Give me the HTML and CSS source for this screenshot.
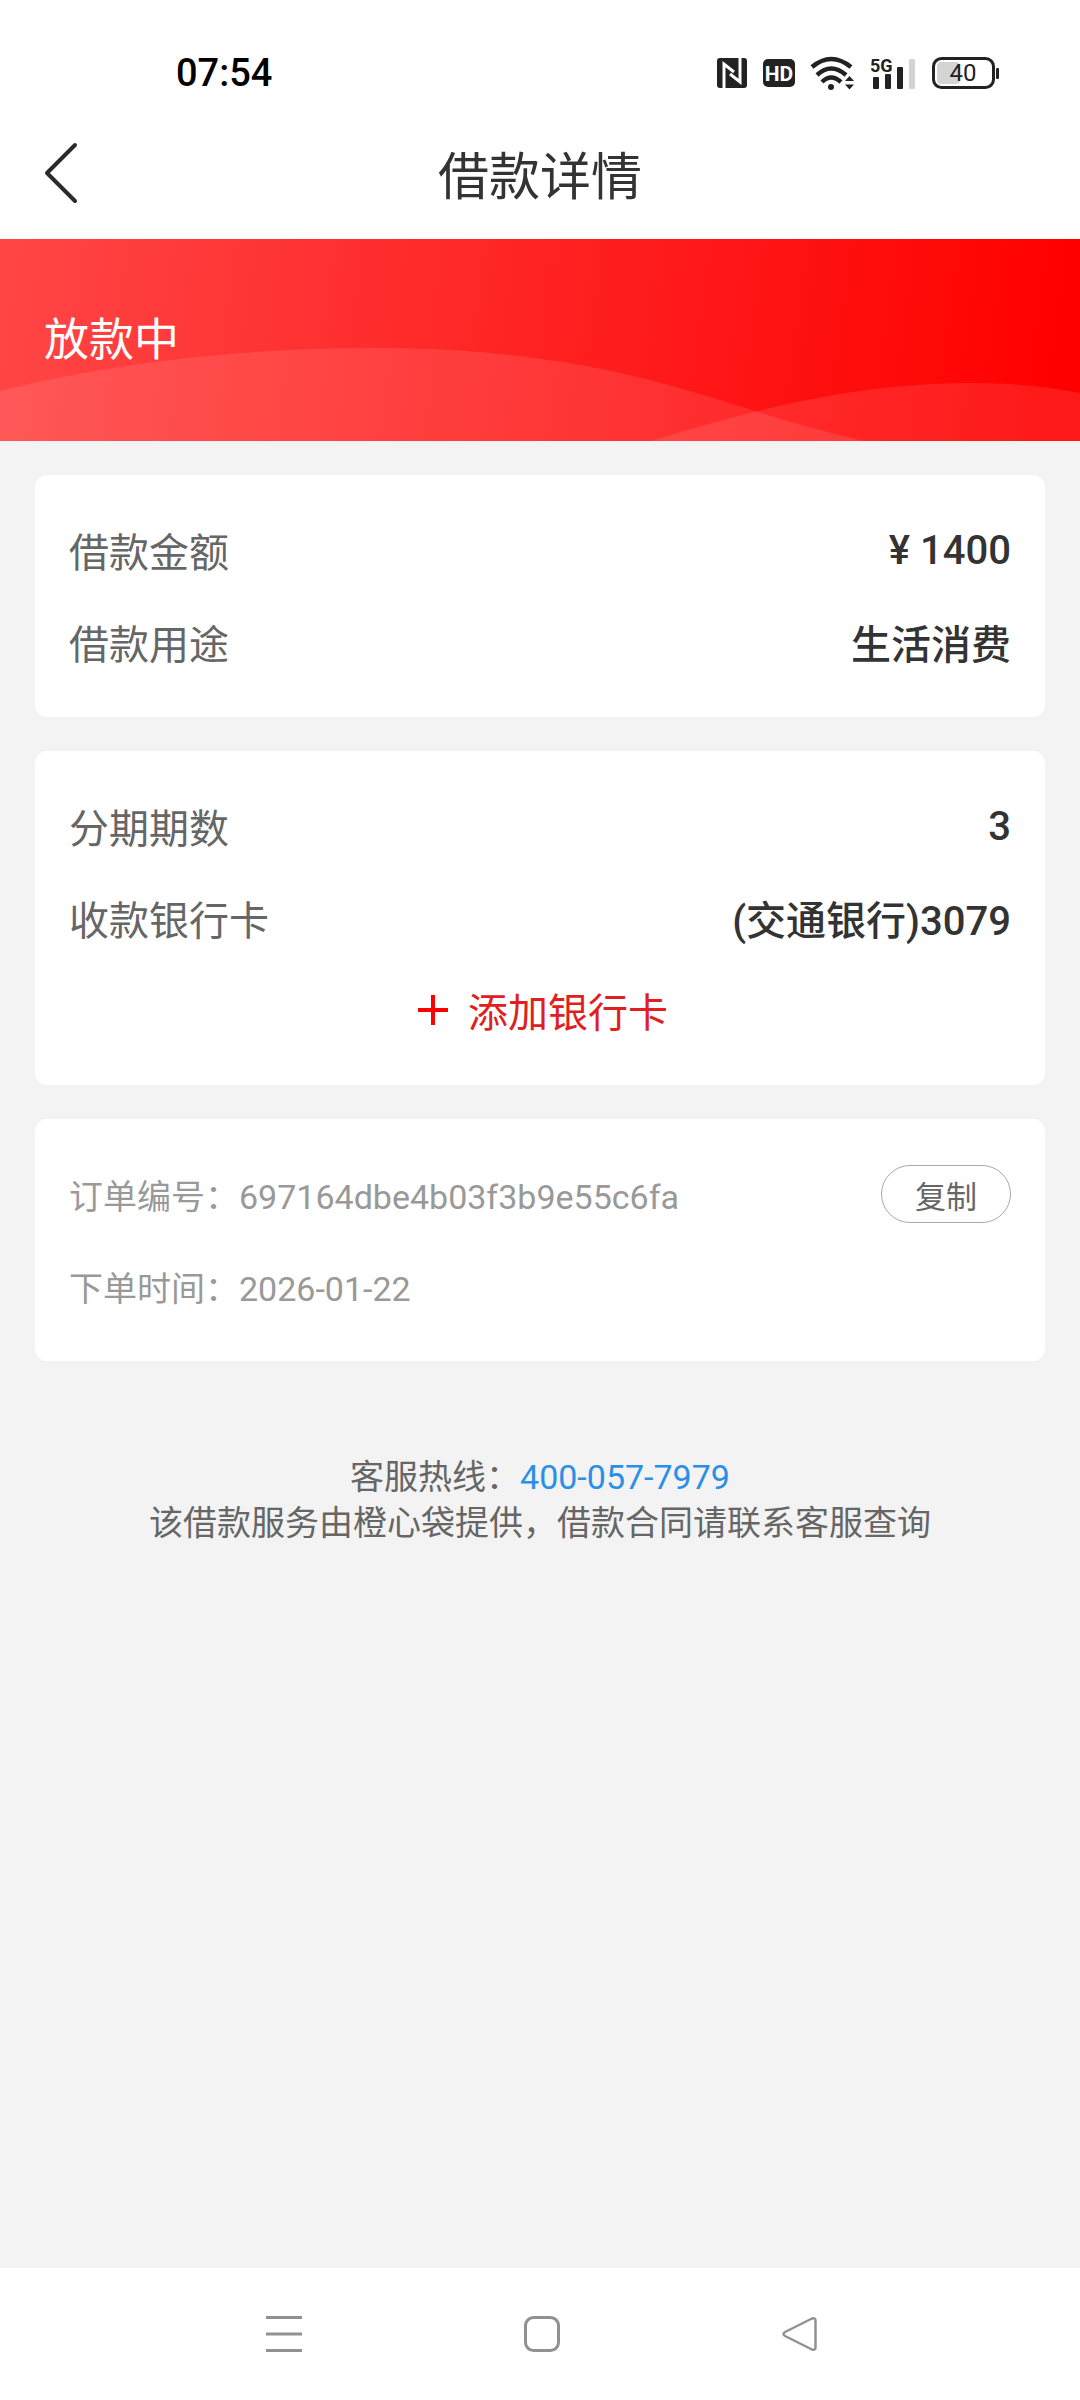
FILE: index.html
```
<!DOCTYPE html>
<html lang="zh-CN">
<head>
  <meta charset="UTF-8">
  <meta name="viewport" content="width=device-width, initial-scale=1.0">
  <title>借款详情</title>
  <link rel="stylesheet" href="styles.css">
</head>
<body>
  <div class="page">
    <div class="status-bar">
      <span class="clock">07:54</span>
      <div class="status-icons">
        <svg class="icon-nfc" width="30" height="30" viewBox="0 0 30 30">
          <rect width="30" height="30" rx="3" fill="#222"/>
          <path d="M7 30V6L17 14M23 0V24L13 16" fill="none" stroke="#fff" stroke-width="3"/>
        </svg>
        <svg class="icon-hd" width="32" height="28" viewBox="0 0 32 28">
          <rect width="32" height="28" rx="5" fill="#222"/>
          <text x="16" y="22" text-anchor="middle">HD</text>
        </svg>
        <svg class="icon-wifi" width="43" height="34" viewBox="0 0 43 34">
          <g fill="none" stroke="#222" stroke-width="4.500">
            <path d="M1 11Q20 -5 40 11"/>
            <path d="M6 19Q20 6 35 19"/>
            <path d="M11 26Q20 17 30 26"/>
          </g>
          <circle cx="20" cy="31" r="3" fill="#222"/>
          <path d="M34 25L38.500 20L43 25ZM34 28.500H43L38.500 33.500Z" fill="#222"/>
        </svg>
        <svg class="icon-signal" width="46" height="34" viewBox="0 0 46 34">
          <text x="0" y="16">5G</text>
          <g fill="#222">
            <rect x="3" y="21" width="6" height="12" rx="1"/>
            <rect x="15" y="18" width="6" height="15" rx="1"/>
            <rect x="27" y="11" width="6" height="22" rx="1"/>
          </g>
          <rect x="39" y="3" width="6" height="30" rx="1" fill="#d4d4d4"/>
        </svg>
        <svg class="icon-battery" width="67" height="32" viewBox="0 0 67 32">
          <rect x="5" y="5" width="23" height="22" rx="4" fill="#d4d4d4"/>
          <rect x="1.500" y="1.500" width="60" height="29" rx="8" fill="none" stroke="#222" stroke-width="3"/>
          <rect x="64" y="11" width="3" height="11" rx="1" fill="#222"/>
          <text x="31" y="24" text-anchor="middle">40</text>
        </svg>
      </div>
    </div>

    <header class="header">
      <button class="back" type="button" aria-label="返回">
        <svg width="34" height="62" viewBox="0 0 34 62">
          <path d="M31 3L3 31L31 59" fill="none" stroke="#2b2b2b" stroke-width="4" stroke-linecap="round" stroke-linejoin="round"/>
        </svg>
      </button>
      <h1 class="title">借款详情</h1>
    </header>

    <section class="banner">
      <svg class="waves" viewBox="0 0 1080 202" preserveAspectRatio="none">
        <path d="M0 152C110 124 240 109 375 109C490 109 580 123 650 141Q706 156 758 173Q820 192 864 202H0Z"/>
        <path d="M651 202C760 168 860 144 975 144Q1030 144 1080 154V202Z"/>
      </svg>
      <h2 class="state">放款中</h2>
    </section>

    <main class="content">
      <section class="card">
        <div class="row">
          <span class="label">借款金额</span>
          <span class="value">¥ 1400</span>
        </div>
        <div class="row">
          <span class="label">借款用途</span>
          <span class="value">生活消费</span>
        </div>
      </section>

      <section class="card">
        <div class="row">
          <span class="label">分期期数</span>
          <span class="value">3</span>
        </div>
        <div class="row">
          <span class="label">收款银行卡</span>
          <span class="value">(交通银行)3079</span>
        </div>
        <button class="row add-card" type="button">
          <svg width="30" height="30" viewBox="0 0 30 30">
            <path d="M15 0V30M0 15H30" stroke="#f00" stroke-width="4"/>
          </svg>
          添加银行卡
        </button>
      </section>

      <section class="card">
        <div class="row order">
          <span>订单编号：697164dbe4b03f3b9e55c6fa</span>
          <button class="copy" type="button">复制</button>
        </div>
        <div class="row order">
          <span>下单时间：2026-01-22</span>
        </div>
      </section>
    </main>

    <footer class="service">
      <p>客服热线：<a href="tel:400-057-7979">400-057-7979</a></p>
      <p>该借款服务由橙心袋提供，借款合同请联系客服查询</p>
    </footer>

    <nav class="nav-bar">
      <button type="button" aria-label="最近任务">
        <svg width="36" height="36" viewBox="0 0 36 36">
          <path d="M0 1.500H36M0 18H36M0 34.500H36" stroke="#919191" stroke-width="3"/>
        </svg>
      </button>
      <button type="button" aria-label="主屏幕">
        <svg width="36" height="36" viewBox="0 0 36 36">
          <rect x="1.500" y="1.500" width="33" height="33" rx="8" fill="none" stroke="#919191" stroke-width="3"/>
        </svg>
      </button>
      <button type="button" aria-label="返回上一页">
        <svg width="36" height="36" viewBox="0 0 36 36">
          <path d="M30 2.500L3 16Q0 18 3 20L30 33.500Q33.500 34.500 33.500 31.500V4.500Q33.500 1.500 30 2.500Z" fill="none" stroke="#919191" stroke-width="2.500" stroke-linejoin="round"/>
        </svg>
      </button>
    </nav>
  </div>
</body>
</html>
```
FILE: styles.css
```
* {
    box-sizing: border-box;
    margin: 0;
    padding: 0;
}

body {
    background: #f3f3f3;
    color: #333;
    font-family: Roboto, "Noto Sans CJK SC", sans-serif;
}

button {
    background: none;
    border: none;
    font-family: inherit;
    cursor: pointer;
}

svg {
    display: block;
    overflow: visible;
}

.page {
    display: flex;
    flex-direction: column;
    min-height: 100vh;
}

/* status bar */
.status-bar {
    display: flex;
    justify-content: space-between;
    align-items: center;
    height: 112px;
    padding: 33px 81px 0 176px;
    background: #fff;
}

.clock {
    color: #000;
    font-size: 38px;
    font-weight: 500;
}

.status-icons {
    display: flex;
    align-items: center;
    gap: 16px;
}

.status-icons text {
    font-family: Roboto, sans-serif;
    font-weight: 700;
    fill: #222;
}

.icon-hd text {
    font-size: 21px;
    fill: #fff;
}

.icon-signal text {
    font-size: 18px;
}

.icon-battery text {
    font-size: 24px;
    font-weight: 400;
}

/* title bar */
.header {
    display: grid;
    grid-template-columns: 120px 1fr 120px;
    align-items: center;
    height: 127px;
    padding-bottom: 6px;
    background: #fff;
}

.back {
    padding-left: 44px;
}

.title {
    grid-column: 2;
    text-align: center;
    font-size: 51px;
    font-weight: 400;
}

/* loan state */
.banner {
    position: relative;
    display: flex;
    align-items: center;
    height: 202px;
    padding: 0 44px 8px;
    background: linear-gradient(98deg, #ff4646, #f00 97%);
}

.waves {
    position: absolute;
    left: 0;
    bottom: 0;
    width: 100%;
    height: 100%;
    fill: rgba(255, 255, 255, 0.1);
}

.state {
    position: relative;
    color: #fff;
    font-size: 45px;
    font-weight: 400;
}

/* cards */
.content {
    display: flex;
    flex-direction: column;
    gap: 34px;
    padding: 34px 35px 0;
}

.card {
    padding: 29px 34px;
    border-radius: 12px;
    background: #fff;
}

.row {
    display: flex;
    justify-content: space-between;
    align-items: center;
    height: 92px;
    font-size: 40px;
}

.label {
    color: #666;
}

.value {
    font-weight: 500;
}

.add-card {
    justify-content: center;
    gap: 20px;
    width: 100%;
    padding-left: 6px;
    color: #e02020;
}

.order {
    color: #999;
    font-size: 34px;
}

.copy {
    width: 130px;
    height: 58px;
    border: 1px solid #aaa;
    border-radius: 29px;
    color: #666;
    font-size: 31px;
}

/* hotline */
.service {
    padding: 93px 35px;
    color: #666;
    font-size: 34px;
    line-height: 46px;
    text-align: center;
}

.service a {
    color: #2a8fe6;
    text-decoration: none;
}

/* system navigation */
.nav-bar {
    display: flex;
    justify-content: center;
    align-items: center;
    gap: 222px;
    height: 132px;
    margin-top: auto;
    padding-left: 4px;
    background: #fff;
}
```
